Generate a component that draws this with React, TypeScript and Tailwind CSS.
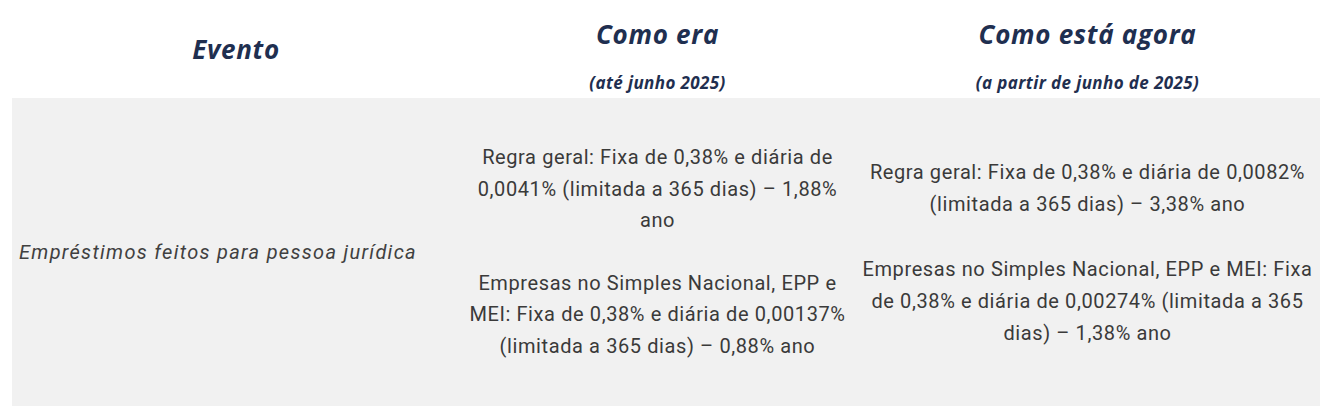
import React from "react";

const navy = "text-[#1f2f50]";

const Header: React.FC<{ title: string; sub?: string; width: string }> = ({ title, sub, width }) => (
  <div className={`${width} flex flex-col items-center ${sub ? "justify-between pt-[17px] pb-[4px]" : "justify-center"} ${navy} font-['Open_Sans',sans-serif]`}>
    <div className="text-[26px] leading-[34px] font-bold italic tracking-[0.7px]">{title}</div>
    {sub && <div className="text-[17px] leading-[22px] font-bold italic tracking-[0.4px]">{sub}</div>}
  </div>
);

export default function App() {
  return (
    <div className="w-[1330px] h-[414px] bg-white pl-3 pr-[10px]">
      {/* header row */}
      <div className="flex h-[98px]">
        <Header title="Evento" width="w-[448px]" />
        <Header title="Como era" sub="(até junho 2025)" width="w-[395px]" />
        <Header title="Como está agora" sub="(a partir de junho de 2025)" width="w-[465px]" />
      </div>

      {/* body row */}
      <div className="flex h-[308px] bg-[#f1f1f1] text-[#3a3a3a] font-['Roboto',sans-serif]">
        <div className="w-[448px] flex items-center pl-[7px]">
          <p className="text-[20px] italic tracking-[1.3px] text-[#404040]">Empréstimos feitos para pessoa jurídica</p>
        </div>
        <div className="w-[395px] flex flex-col justify-center items-center gap-[31px] px-[3px] text-center text-[20px] leading-[31.5px] tracking-[0.6px]">
          <p>Regra geral: Fixa de 0,38% e diária de 0,0041% (limitada a 365 dias) – 1,88% ano</p>
          <p>Empresas no Simples Nacional, EPP e MEI: Fixa de 0,38% e diária de 0,00137% (limitada a 365 dias) – 0,88% ano</p>
        </div>
        <div className="w-[465px] flex flex-col justify-center items-center gap-[33px] px-[3px] text-center text-[20px] leading-[32px] tracking-[0.6px]">
          <p>Regra geral: Fixa de 0,38% e diária de 0,0082% (limitada a 365 dias) – 3,38% ano</p>
          <p>Empresas no Simples Nacional, EPP e MEI: Fixa de 0,38% e diária de 0,00274% (limitada a 365 dias) – 1,38% ano</p>
        </div>
      </div>
    </div>
  );
}
